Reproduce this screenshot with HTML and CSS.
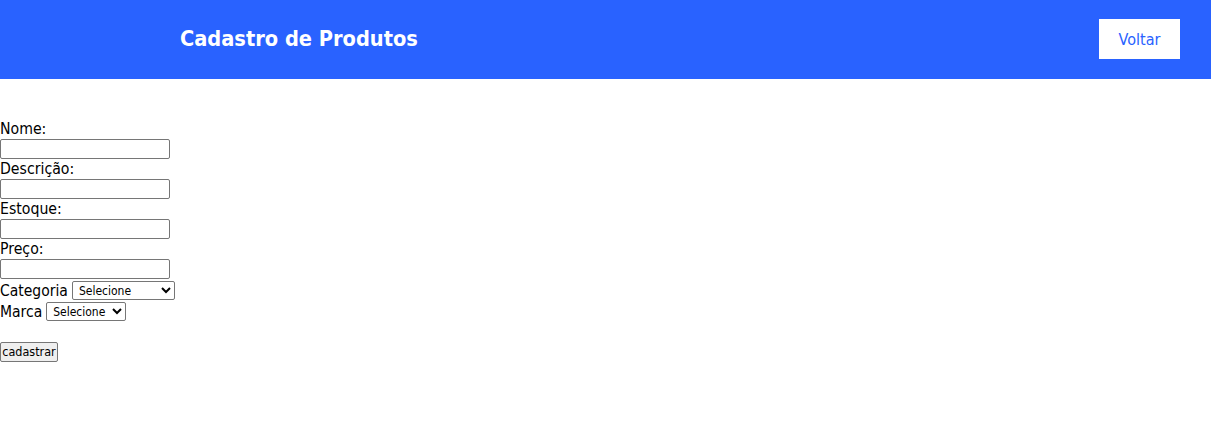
FILE: index.html
```html
<!DOCTYPE html>
<html lang="pt-BR">
<head>
<meta charset="utf-8">
<title>Cadastro de Produtos</title>
<link rel="stylesheet" href="styles.css">
</head>
<body>
<header class="topbar">
  <h1 class="title">Cadastro de Produtos</h1>
  <a class="back" href="#">Voltar</a>
</header>
<form class="form">
  <label class="label" for="nome">Nome:</label>
  <input class="field" id="nome" type="text">
  <label class="label" for="descricao">Descrição:</label>
  <input class="field" id="descricao" type="text">
  <label class="label" for="estoque">Estoque:</label>
  <input class="field" id="estoque" type="text">
  <label class="label" for="preco">Preço:</label>
  <input class="field" id="preco" type="text">
  <div class="row row-cat">
    <label class="inline-label" for="categoria">Categoria</label>
    <select class="select select-cat" id="categoria"><option>Selecione</option></select>
  </div>
  <div class="row row-marca">
    <label class="inline-label" for="marca">Marca</label>
    <select class="select select-marca" id="marca"><option>Selecione</option></select>
  </div>
  <div class="actions">
    <button class="submit" type="button">cadastrar</button>
  </div>
</form>
</body>
</html>
```
FILE: styles.css
```css
html, body {
  margin: 0;
  padding: 0;
  background: #ffffff;
}
body {
  font-family: "DejaVu Sans Condensed", "DejaVu Sans", sans-serif;
  color: #000;
}
.topbar {
  display: flex;
  align-items: center;
  justify-content: space-between;
  height: 79px;
  background: #2962ff;
  padding: 0 31px 1px 180px;
  box-sizing: border-box;
}
.title {
  margin: 0;
  color: #fff;
  font-size: 21.6px;
  font-weight: bold;
  line-height: 1;
}
.back {
  display: flex;
  align-items: center;
  justify-content: center;
  width: 81px;
  height: 40px;
  background: #fff;
  color: #2962ff;
  text-decoration: none;
  font-size: 16px;
}
.form {
  display: flex;
  flex-direction: column;
  align-items: flex-start;
  padding-top: 40px;
}
.label {
  display: block;
  font-size: 15.7px;
  line-height: 20px;
  height: 20px;
}
.field {
  box-sizing: border-box;
  width: 170px;
  height: 20px;
  margin: 0;
  padding: 1px 2px;
  border: 1px solid #767676;
  border-radius: 2px;
  font: 13px "DejaVu Sans Condensed", "DejaVu Sans", sans-serif;
}
.row {
  display: flex;
  align-items: center;
  gap: 4px;
  height: 21px;
  font-size: 15.5px;
}
.row-cat {
  margin-top: 1px;
}
.select {
  box-sizing: border-box;
  height: 19px;
  margin: 0;
  padding: 0 0 0 2px;
  border: 1px solid #767676;
  border-radius: 2px;
  background: #fff;
  font: 12px "DejaVu Sans Condensed", "DejaVu Sans", sans-serif;
  color: #000;
}
.select-cat {
  width: 103px;
}
.select-marca {
  width: 80px;
}
.actions {
  padding-top: 19px;
}
.submit {
  box-sizing: border-box;
  width: 58px;
  height: 20px;
  margin: 0;
  padding: 0;
  border: 1px solid #767676;
  border-radius: 2px;
  background: #efefef;
  font: 12.5px "DejaVu Sans Condensed", "DejaVu Sans", sans-serif;
  color: #000;
}
```
